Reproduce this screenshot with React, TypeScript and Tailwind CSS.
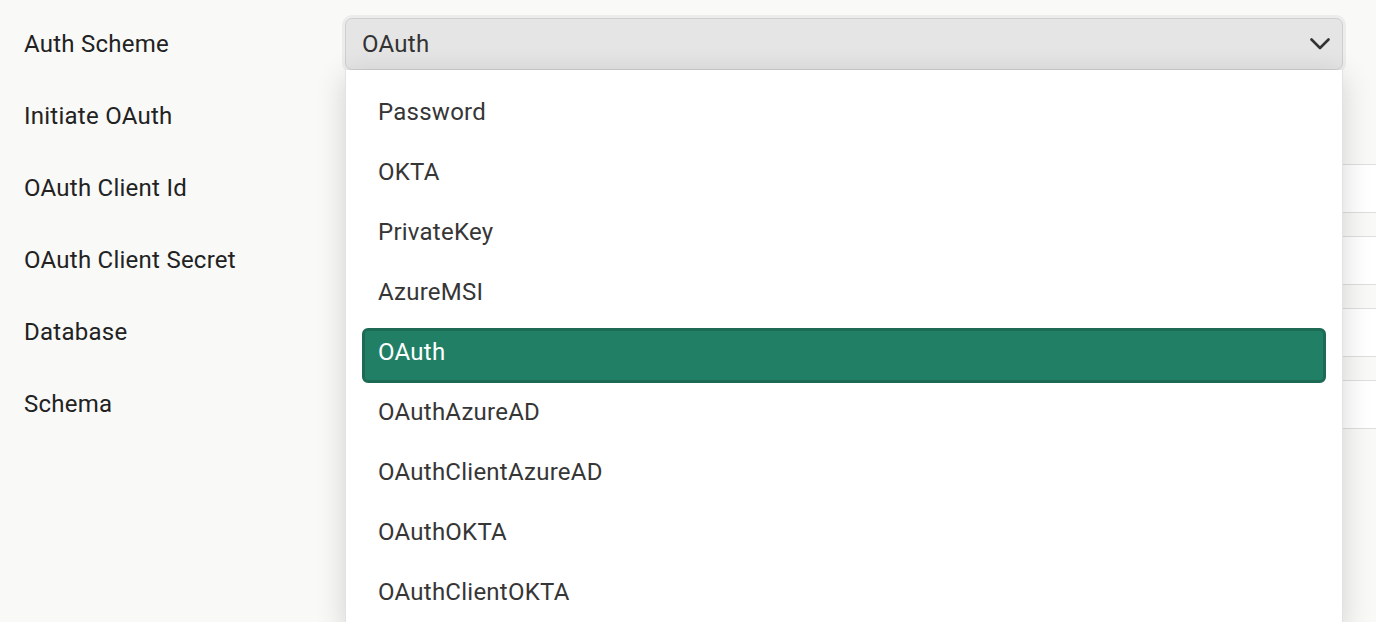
import { useState } from "react";

const fields: { label: string; kind: "select" | "input" }[] = [
  { label: "Auth Scheme", kind: "select" },
  { label: "Initiate OAuth", kind: "select" },
  { label: "OAuth Client Id", kind: "input" },
  { label: "OAuth Client Secret", kind: "input" },
  { label: "Database", kind: "input" },
  { label: "Schema", kind: "input" },
];

const schemes = [
  "Password",
  "OKTA",
  "PrivateKey",
  "AzureMSI",
  "OAuth",
  "OAuthAzureAD",
  "OAuthClientAzureAD",
  "OAuthOKTA",
  "OAuthClientOKTA",
];

function Chevron() {
  return (
    <svg width="20" height="12" viewBox="0 0 20 12" fill="none">
      <path
        d="M1.5 1.5 L10 10 L18.5 1.5"
        stroke="#333"
        strokeWidth="2.6"
        strokeLinecap="round"
        strokeLinejoin="round"
      />
    </svg>
  );
}

export default function App() {
  const [scheme, setScheme] = useState("OAuth");

  return (
    <div
      className="h-[622px] w-[1376px] overflow-hidden bg-[#f9f9f8] pt-2 tracking-[0.25px]"
      style={{ fontFamily: "Roboto, 'Noto Sans', sans-serif" }}
    >
      <div className="w-[1420px]">
        {fields.map((f, i) => (
          <div key={f.label} className="flex h-[72px] items-center">
            <div className="w-[345px] pl-6 text-[24px] text-[#222]">{f.label}</div>
            {f.kind === "select" ? (
              <div className="relative w-[998px]">
                {/* select box, the first one is open */}
                <div
                  className={`flex h-[52px] items-center justify-between rounded-[7px] border border-[#cfcfcf] bg-[#e5e5e5] pl-4 pr-3 text-[24px] text-[#333] ${
                    i === 0 ? "ring-[3px] ring-[#ececec]" : ""
                  }`}
                >
                  <span>{i === 0 ? scheme : ""}</span>
                  <Chevron />
                </div>
                {i === 0 && (
                  <div className="absolute left-0 top-[52px] z-10 w-[998px] border-x border-[#e2e2e2] bg-white px-[16px] pt-[18px] shadow-[0_6px_28px_rgba(0,0,0,0.16)]">
                    {schemes.map((s) => (
                      <div
                        key={s}
                        onClick={() => setScheme(s)}
                        className={`mb-[5px] flex h-[55px] items-center rounded-[6px] pb-[8px] text-[24px] ${
                          s === scheme
                            ? "border-[3px] border-[#1d6b55] bg-[#217f66] pl-[13px] text-white"
                            : "pl-[16px] text-[#363636]"
                        }`}
                      >
                        {s}
                      </div>
                    ))}
                  </div>
                )}
              </div>
            ) : (
              <div className="h-[49px] flex-1 border border-[#dedede] bg-white" />
            )}
          </div>
        ))}
      </div>
    </div>
  );
}
